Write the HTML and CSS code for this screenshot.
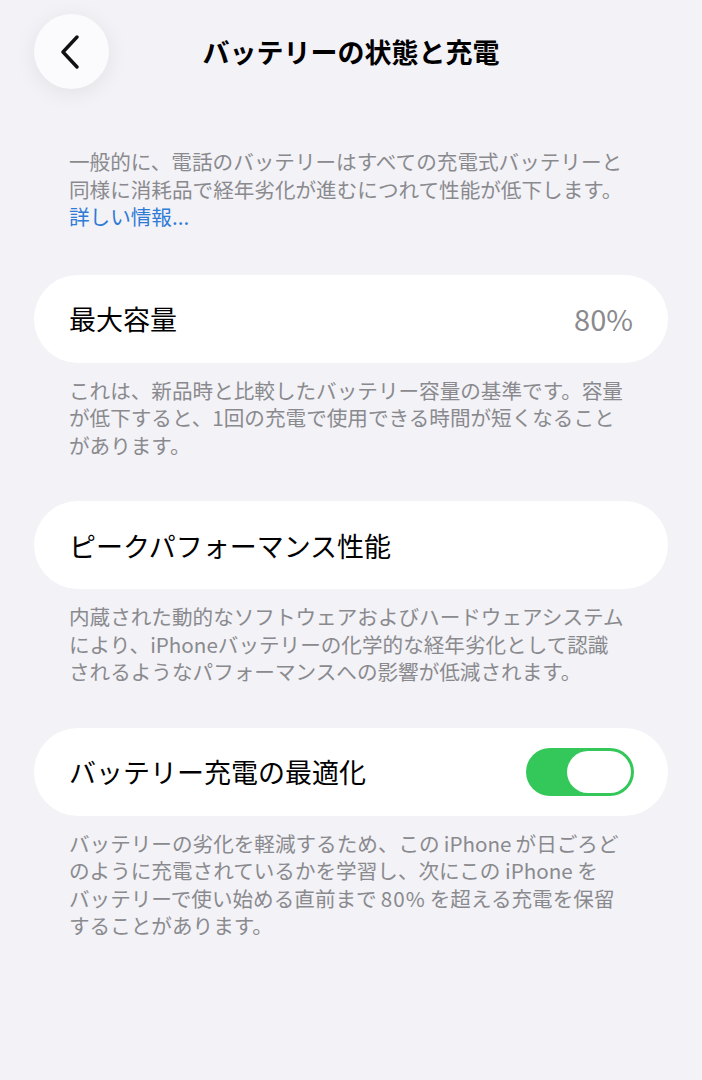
FILE: index.html
```html
<!DOCTYPE html>
<html lang="ja">
<head>
<meta charset="utf-8">
<title>バッテリーの状態と充電</title>
<link rel="stylesheet" href="styles.css">
</head>
<body>
<div class="page">
  <header class="nav">
    <button class="back" aria-label="戻る">
      <svg width="22" height="34" viewBox="0 0 22 34"><path d="M18 2 L4 17 L18 32" fill="none" stroke="#111" stroke-width="3.4" stroke-linecap="round" stroke-linejoin="round"/></svg>
    </button>
    <h1 class="title">バッテリーの状態と充電</h1>
    <span></span>
  </header>

  <main class="content">
    <p class="note intro">一般的に、電話のバッテリーはすべての充電式バッテリーと<br>同様に消耗品で経年劣化が進むにつれて性能が低下します。<br><a class="link" href="#">詳しい情報...</a></p>

    <div class="card">
      <span class="label">最大容量</span>
      <span class="value">80%</span>
    </div>
    <p class="note">これは、新品時と比較したバッテリー容量の基準です。容量<br>が低下すると、1回の充電で使用できる時間が短くなること<br>があります。</p>

    <div class="card">
      <span class="label">ピークパフォーマンス性能</span>
    </div>
    <p class="note">内蔵された動的なソフトウェアおよびハードウェアシステム<br>により、iPhoneバッテリーの化学的な経年劣化として認識<br>されるようなパフォーマンスへの影響が低減されます。</p>

    <div class="card">
      <span class="label">バッテリー充電の最適化</span>
      <span class="toggle"><span class="knob"></span></span>
    </div>
    <p class="note">バッテリーの劣化を軽減するため、この&#8201;iPhone&#8201;が日ごろど<br>のように充電されているかを学習し、次にこの iPhone を<br>バッテリーで使い始める直前まで&#8201;<span class="num">80%</span>&#8201;を超える充電を保留<br>することがあります。</p>
  </main>
</div>
</body>
</html>
```

FILE: styles.css
```css
* { box-sizing: border-box; }
html, body { margin: 0; padding: 0; }
body {
  background: #f2f2f7;
  font-family: "Noto Sans CJK JP", "Noto Sans", sans-serif;
  color: #000;
  width: 702px;
  min-height: 1080px;
}
.page { padding: 14px 34px 0; }
.nav {
  display: grid;
  grid-template-columns: 75px 1fr 75px;
  align-items: center;
  height: 75px;
}
.back {
  width: 75px;
  height: 75px;
  border-radius: 50%;
  border: none;
  background: #fbfbfd;
  box-shadow: 0 4px 22px rgba(0,0,0,0.07);
  display: flex;
  align-items: center;
  justify-content: center;
  padding: 0 4px 0 0;
}
.title {
  margin: 0;
  text-align: center;
  font-size: 27px;
  font-weight: 700;
  letter-spacing: 0;
  line-height: 1;
}
.content { padding-top: 59px; }
.note {
  margin: 0;
  padding: 0 35px;
  font-size: 20.6px;
  line-height: 27.5px;
  color: #8a8a8e;
}
.num { letter-spacing: 1px; }
.link { color: #2f7bd5; text-decoration: none; }
.intro { margin-bottom: 44px; }
.card {
  height: 88px;
  border-radius: 44px;
  background: #fff;
  display: flex;
  align-items: center;
  justify-content: space-between;
  padding: 0 35px;
  margin-bottom: 14px;
}
.note + .card { margin-top: 42px; }
.label { font-size: 27px; line-height: 1; }
.value { font-size: 29px; color: #8a8a8e; line-height: 1; }
.toggle {
  width: 108px;
  height: 48px;
  border-radius: 24px;
  background: #34c759;
  position: relative;
  margin-right: -1px;
}
.knob {
  position: absolute;
  right: 3px;
  top: 3px;
  width: 64px;
  height: 42px;
  border-radius: 21px;
  background: #fff;
}
```
